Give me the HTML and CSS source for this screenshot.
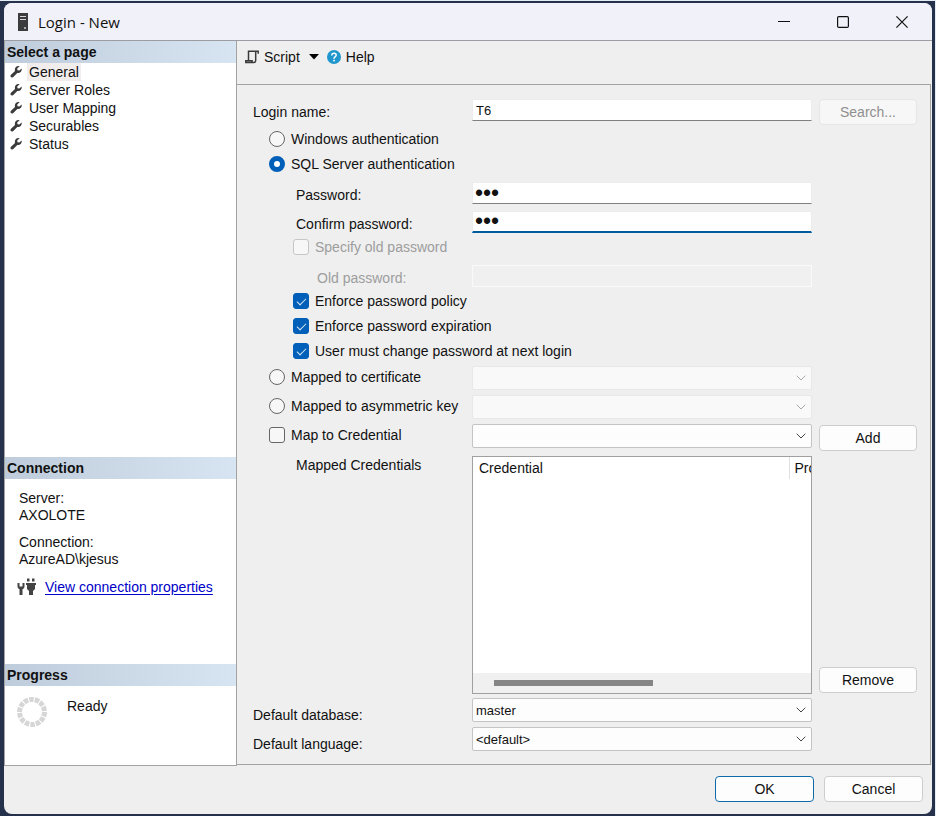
FILE: index.html
```html
<!DOCTYPE html>
<html lang="en">
<head>
  <meta charset="UTF-8">
  <meta name="viewport" content="width=device-width, initial-scale=1.0">
  <title>Login - New</title>
  <link rel="stylesheet" href="styles.css">
</head>
<body>
  <!-- Shared icons -->
  <svg class="sprite" aria-hidden="true">
    <symbol id="wrench" viewBox="0 0 12 12">
      <path d="M9.600 0.200 L7.200 2.500 L7.500 4.300 L9.300 4.600 L11.700 2.500 C12.100 5.200 10.100 7.500 7.300 7 L3.300 11 C1.600 12.600 -0.600 10.600 1 8.800 L5 5 C4.200 2 6.600 -0.600 9.600 0.200 Z" fill="#3b3b3b"/>
    </symbol>
    <symbol id="chevron" viewBox="0 0 10 6">
      <path d="M0.7 0.7 L5 5 L9.3 0.7" fill="none" stroke="currentColor"/>
    </symbol>
  </svg>

  <div class="window">
    <header class="titlebar">
      <svg class="server-icon" width="12" height="18" viewBox="0 0 12 18">
        <rect x="1" width="10" height="18" fill="#3c3c3e"/>
        <path d="M3 3.5h6M3 6.5h6" stroke="#d8d8dc"/>
        <rect x="7" y="14" width="2" height="2" fill="#a8a8ac"/>
      </svg>
      <h1>Login - New</h1>
      <div class="window-buttons">
        <button type="button" aria-label="Minimize"><svg width="12" height="12"><path d="M0 5.5h12" stroke="#111"/></svg></button>
        <button type="button" aria-label="Maximize"><svg width="12" height="12"><rect x="0.6" y="0.6" width="10.8" height="10.8" rx="1.2" fill="none" stroke="#111" stroke-width="1.2"/></svg></button>
        <button type="button" aria-label="Close"><svg width="12" height="12"><path d="M0.4 0.4l11.2 11.2M11.6 0.4L0.4 11.6" stroke="#111" stroke-width="1.2"/></svg></button>
      </div>
    </header>

    <div class="content">
      <aside class="sidebar">
        <section class="pages">
          <h2>Select a page</h2>
          <ul>
            <li><svg><use href="#wrench"/></svg><a class="current" href="#general">General</a></li>
            <li><svg><use href="#wrench"/></svg><a href="#roles">Server Roles</a></li>
            <li><svg><use href="#wrench"/></svg><a href="#mapping">User Mapping</a></li>
            <li><svg><use href="#wrench"/></svg><a href="#securables">Securables</a></li>
            <li><svg><use href="#wrench"/></svg><a href="#status">Status</a></li>
          </ul>
        </section>

        <section class="connection">
          <h2>Connection</h2>
          <dl>
            <dt>Server:</dt>
            <dd>AXOLOTE</dd>
            <dt>Connection:</dt>
            <dd>AzureAD\kjesus</dd>
          </dl>
          <div class="properties">
            <svg width="20" height="18" viewBox="0 0 20 18" fill="#444">
              <path d="M0.5 5v3.5q0 2 2 2.800V17h3v-5.700q2-0.800 2-2.800V5h-2v3.500h-3V5z"/>
              <path d="M10 0.500h2.500v3H10zM15 0.500h2.500v3H15zM9 5h10v2h-1v4l-2 2v4h-4v-4l-2-2V7H9z"/>
            </svg>
            <a href="#properties">View connection properties</a>
          </div>
        </section>

        <section class="progress">
          <h2>Progress</h2>
          <div class="progress-body">
            <svg width="30" height="30" viewBox="0 0 30 30">
              <circle cx="15" cy="15" r="12.500" fill="none" stroke="#d6d6d6" stroke-width="5" pathLength="140" stroke-dasharray="8 2"/>
            </svg>
            <span>Ready</span>
          </div>
        </section>
      </aside>

      <main class="main">
        <div class="toolbar">
          <button type="button" class="script-button">
            <svg width="14" height="14" viewBox="0 0 14 14" fill="none" stroke="#3b3b3b" stroke-width="1.500">
              <path d="M3.500 10V1.200h9.700v2.500M10.700 1.200v9.300q0 2-2 2H0.800v-1.800h6.300v1.500"/>
            </svg>
            Script
            <svg class="arrow" width="10" height="6"><path d="M0 0h10L5 5.500z" fill="#000"/></svg>
          </button>
          <button type="button" class="help-button">
            <svg width="14" height="14" viewBox="0 0 14 14">
              <circle cx="7" cy="7" r="7" fill="#1f96cc"/>
              <path d="M4.800 5.400q0-2.200 2.200-2.200t2.200 1.900q0 1.100-1.100 1.800T7 8.700" fill="none" stroke="#fff" stroke-width="1.500"/>
              <rect x="6.200" y="9.800" width="1.600" height="1.600" fill="#fff"/>
            </svg>
            Help
          </button>
        </div>

        <form class="form" id="loginForm">
          <label class="name" for="login">Login name:</label>
          <input class="field text" type="text" id="login" value="T6">
          <button class="side" type="button" disabled>Search...</button>

          <label class="choice"><input type="radio" name="auth">Windows authentication</label>
          <label class="choice"><input type="radio" name="auth" checked>SQL Server authentication</label>

          <label class="name indent" for="password">Password:</label>
          <input class="field text" type="password" id="password" value="abc">
          <label class="name indent" for="confirm">Confirm password:</label>
          <input class="field text focused" type="password" id="confirm" value="abc">

          <label class="choice nested disabled"><input type="checkbox" disabled>Specify old password</label>
          <label class="name deep disabled" for="old">Old password:</label>
          <input class="field text" type="password" id="old" disabled>

          <label class="choice nested"><input type="checkbox" checked>Enforce password policy</label>
          <label class="choice nested"><input type="checkbox" checked>Enforce password expiration</label>
          <label class="choice nested"><input type="checkbox" checked>User must change password at next login</label>

          <label class="choice short"><input type="radio" name="auth">Mapped to certificate</label>
          <div class="field select disabled">
            <select aria-label="Certificate" disabled></select>
            <svg><use href="#chevron"/></svg>
          </div>
          <label class="choice short"><input type="radio" name="auth">Mapped to asymmetric key</label>
          <div class="field select disabled">
            <select aria-label="Asymmetric key" disabled></select>
            <svg><use href="#chevron"/></svg>
          </div>
          <label class="choice short"><input type="checkbox">Map to Credential</label>
          <div class="field select">
            <select aria-label="Credential"></select>
            <svg><use href="#chevron"/></svg>
          </div>
          <button class="side add" type="button">Add</button>

          <span class="name indent list-label" id="mappedLabel">Mapped Credentials</span>
          <div class="field list">
            <table aria-labelledby="mappedLabel">
              <thead>
                <tr><th>Credential</th><th>Provider</th></tr>
              </thead>
            </table>
            <div class="scrollbar"><div class="thumb"></div></div>
          </div>
          <button class="side remove" type="button">Remove</button>

          <label class="name default" for="database">Default database:</label>
          <div class="field select">
            <select id="database"><option>master</option></select>
            <svg><use href="#chevron"/></svg>
          </div>
          <label class="name default" for="language">Default language:</label>
          <div class="field select">
            <select id="language"><option>&lt;default&gt;</option></select>
            <svg><use href="#chevron"/></svg>
          </div>
        </form>
      </main>
    </div>

    <footer class="footer">
      <button type="submit" form="loginForm" class="ok">OK</button>
      <button type="button">Cancel</button>
    </footer>
  </div>
</body>
</html>
```
FILE: styles.css
```css
* {
  box-sizing: border-box;
}

body {
  margin: 0;
  min-height: 100vh;
  display: flex;
  padding: 2px 3px 2px 4px;
  background-color: #26324c;
  border-top: 1px solid #e4edf5;
  border-right: 1px solid #e4edf5;
  font-family: "Liberation Sans", Arial, sans-serif;
  font-size: 14px;
  color: #111;
}

button,
input,
select {
  font: inherit;
  color: inherit;
}

.sprite {
  position: absolute;
  width: 0;
  height: 0;
}

.window {
  flex: 1;
  display: flex;
  flex-direction: column;
  overflow: hidden;
  border-radius: 8px;
  background-color: #efefef;
}

/* Title bar */
.titlebar {
  display: flex;
  align-items: center;
  height: 38px;
  padding: 0 1px 0 13px;
  background-color: #f1f2f9;
  border-bottom: 1px solid #9b9da3;
}

.titlebar h1 {
  flex: 1;
  margin: 0 0 0 9px;
  font-family: "Open Sans", "Noto Sans", sans-serif;
  font-size: 15px;
  font-weight: normal;
}

.window-buttons {
  display: flex;
}

.window-buttons button {
  display: flex;
  align-items: center;
  justify-content: center;
  width: 59px;
  height: 34px;
  padding: 0;
  border: none;
  background: none;
}

.content {
  flex: 1;
  display: flex;
}

/* Sidebar */
.sidebar {
  width: 233px;
  display: flex;
  flex-direction: column;
  background-color: #fff;
  border: 1px solid #a3a3a3;
  border-top: none;
}

.sidebar h2 {
  margin: 0;
  padding-left: 2px;
  font-size: 14px;
  line-height: 22px;
  background-image: linear-gradient(to right, #bfccdb, #d7e4f2);
}

.sidebar ul {
  margin: 0;
  padding: 0;
  list-style: none;
}

.sidebar li {
  display: flex;
  align-items: center;
  height: 18px;
  padding-left: 5px;
  gap: 5px;
}

.sidebar li svg {
  width: 12px;
  height: 12px;
}

.sidebar li a {
  padding: 0 2px;
  line-height: 18px;
  color: inherit;
  text-decoration: none;
}

.sidebar li .current {
  background-color: #f1eded;
}

.pages {
  flex: 1;
}

.connection {
  height: 207px;
}

.connection dl {
  margin: 0;
  padding: 11px 14px 0;
  line-height: 17px;
}

.connection dd {
  margin: 0 0 10px;
}

.properties {
  display: flex;
  align-items: center;
  gap: 8px;
  padding-left: 12px;
}

.properties a {
  color: #0000c8;
  text-underline-offset: 2px;
}

.progress {
  height: 101px;
}

.progress-body {
  display: flex;
  gap: 20px;
  padding: 11px 12px;
}

.progress-body span {
  line-height: 18px;
}

/* Toolbar */
.main {
  flex: 1;
  display: flex;
  flex-direction: column;
  padding: 0 1px 1px 0;
}

.toolbar {
  display: flex;
  height: 43px;
  padding: 5px 8px;
  gap: 8px;
}

.toolbar button {
  display: flex;
  align-items: center;
  gap: 5px;
  height: 21px;
  padding: 0;
  border: none;
  background: none;
}

.toolbar .arrow {
  margin-left: 4px;
}

/* Form */
.form {
  flex: 1;
  display: grid;
  grid-template-columns: 219px 1fr 98px;
  grid-template-rows: 28px 25px 30px 29px 24px 30px 24px 25px 25px 27px 29px 29px 32px minmax(242px, 1fr) 29px 24px;
  column-gap: 7px;
  align-items: start;
  padding: 14px 13px 13px 16px;
  border: 1px solid #a3a3a3;
  border-left: none;
}

.name {
  grid-column: 1;
  line-height: 26px;
}

.indent {
  padding-left: 43px;
}

.deep {
  padding-left: 64px;
}

.name.default {
  line-height: 34px;
}

.name.list-label {
  line-height: 18px;
}

.choice {
  grid-column: 1 / 3;
  display: flex;
  align-items: center;
  gap: 6px;
  height: 24px;
  padding-left: 16px;
}

.choice.nested {
  padding-left: 40px;
}

.choice.short {
  grid-column: 1;
  height: 21px;
}

.disabled {
  color: #9d9d9d;
}

.choice input {
  appearance: none;
  width: 16px;
  height: 16px;
  margin: 0;
  background-color: #f7f7f7;
  border: 1px solid #666;
  border-radius: 3px;
}

.choice input[type="radio"] {
  border-radius: 50%;
}

.choice input[type="radio"]:checked {
  background-color: #fff;
  border: 5px solid #005fb8;
}

.choice input[type="checkbox"]:checked {
  display: flex;
  align-items: center;
  justify-content: center;
  background-color: #005fb8;
  border-color: #005fb8;
}

.choice input[type="checkbox"]:checked::before {
  content: "";
  width: 8px;
  height: 4px;
  margin-bottom: 2px;
  border: solid #d8e8f6;
  border-width: 0 0 1px 1px;
  transform: rotate(-45deg);
}

.choice input:disabled {
  border-color: #c6c6c6;
}

.field {
  grid-column: 2;
  margin-left: -7px;
  min-width: 0;
  font-size: 13px;
}

.text {
  height: 22px;
  padding: 0 3px;
  background-color: #fff;
  border: 1px solid #ececec;
  border-bottom-color: #808080;
  outline: none;
}

.text[type="password"] {
  padding: 0 2px;
  font-size: 23px;
}

.text.focused {
  border-bottom: 2px solid #005a9e;
}

.text:disabled {
  background-color: #f0f0f0;
  border-color: #fafafa;
}

.select {
  position: relative;
  height: 24px;
}

.select select {
  appearance: none;
  width: 100%;
  height: 24px;
  padding: 0 24px 0 3px;
  background-color: #fdfdfd;
  border: 1px solid #c4c4c4;
  border-radius: 2px;
}

.select select:disabled {
  background-color: #f9f9f9;
  border-color: #e8e8e8;
  opacity: 1;
}

.select svg {
  position: absolute;
  right: 6px;
  top: 9px;
  width: 10px;
  height: 6px;
  color: #444;
  pointer-events: none;
}

.select.disabled svg {
  color: #a8a8a8;
}

/* Credentials list */
.list {
  display: flex;
  flex-direction: column;
  justify-content: space-between;
  height: calc(100% - 4px);
  overflow: hidden;
  background-color: #fff;
  border: 1px solid #a0a0a0;
}

.list table {
  width: 415px;
  table-layout: fixed;
  border-collapse: collapse;
  font-size: 14px;
}

.list th {
  width: 99px;
  height: 22px;
  padding: 0 5px;
  text-align: left;
  font-weight: normal;
}

.list th:first-child {
  width: 316px;
  padding-left: 6px;
  border-right: 1px solid #e0e0e0;
}

.scrollbar {
  height: 20px;
  padding: 7px 21px;
  background-color: #f0f0f0;
}

.thumb {
  width: 50%;
  min-width: 159px;
  height: 6px;
  background-color: #858585;
}

/* Buttons */
.side,
.footer button {
  height: 26px;
  padding: 0;
  background-color: #fdfdfd;
  border: 1px solid #cdcdcd;
  border-radius: 4px;
}

.side {
  grid-column: 3;
}

.side:disabled {
  background-color: #f7f7f7;
  border-color: #e6e6e6;
  color: #8f8f8f;
}

.add {
  margin-top: 1px;
}

.remove {
  align-self: end;
  margin-bottom: 5px;
}

.footer {
  display: flex;
  justify-content: flex-end;
  gap: 10px;
  height: 48px;
  padding: 10px 9px;
}

.footer button {
  width: 99px;
}

.footer .ok {
  border-color: #0f6aa8;
}
```
